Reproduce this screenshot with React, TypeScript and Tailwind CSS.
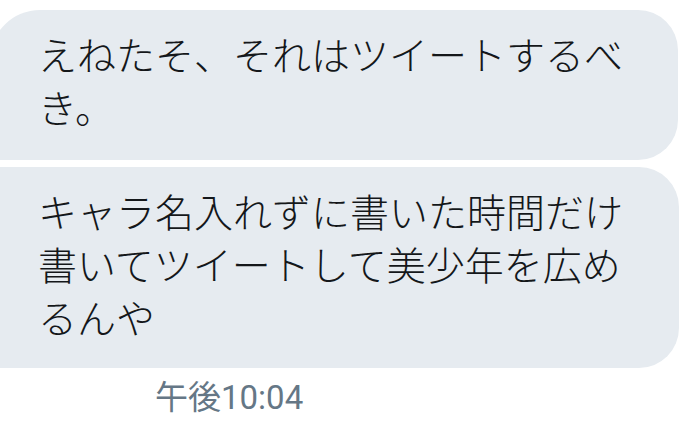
export default function App() {
  const font = { fontFamily: '"Noto Sans CJK JP", "Noto Sans", sans-serif' };
  return (
    <div className="w-[680px] h-[425px] bg-white overflow-hidden" style={font}>
      <div className="flex flex-col gap-[7px] pt-[10px] -ml-[10px]">
        <div className="w-[688px] bg-[#e6ebf0] rounded-tl-[50px] rounded-tr-[40px] rounded-br-[40px] pl-[48px] pr-[50px] pt-[17px] pb-[27px] text-[39px] leading-[53px] font-light text-[#14171a]">
          えねたそ、それはツイートするべき。
        </div>
        <div className="w-[689px] bg-[#e6ebf0] rounded-tr-[40px] rounded-br-[40px] pl-[48px] pr-[50px] pt-[17px] pb-[25px] text-[39px] leading-[53px] font-light text-[#14171a]">
          キャラ名入れずに書いた時間だけ書いてツイートして美少年を広めるんや
        </div>
      </div>
      <div
        className="mt-[10px] pl-[155px] text-[33px] leading-[40px] text-[#657786]"
        style={{ fontFamily: 'Roboto, "Noto Sans CJK JP", sans-serif' }}
      >
        午後10:04
      </div>
    </div>
  );
}
